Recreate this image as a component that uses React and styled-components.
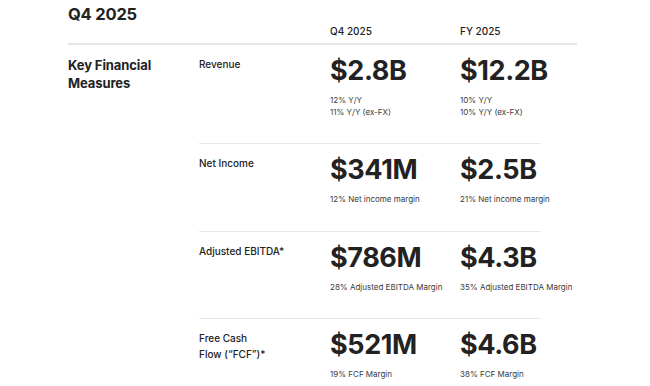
import React from "react";
import styled, { createGlobalStyle } from "styled-components";

const Global = createGlobalStyle`
  html, body { margin: 0; padding: 0; background: #fff; }
  body { font-family: Inter, "Noto Sans", "Liberation Sans", sans-serif; color: #222; }
`;

const Page = styled.div`
  width: 650px;
  height: 386px;
  overflow: hidden;
  box-sizing: border-box;
  padding: 3px 0 0 68px;
`;

const HeaderRow = styled.div`
  display: grid;
  width: 509px;
  grid-template-columns: 131px 131px 130px 117px;
  grid-auto-rows: 35px;
  align-items: end;
  padding-bottom: 5px;
  border-bottom: 2px solid #e6e6e6;
`;

const Title = styled.h1`
  grid-column: 1 / span 2;
  align-self: start;
  margin: 0;
  font-size: 16.5px;
  line-height: 22px;
  font-weight: 700;
  letter-spacing: -0.2px;
  color: #222;
`;

const ColHead = styled.div`
  font-size: 10px;
  line-height: 14px;
  font-weight: 500;
  color: #222;
`;

const Body = styled.div`
  display: grid;
  grid-template-columns: 131px 342px;
`;

const Section = styled.div`
  padding-top: 11px;
  font-size: 13px;
  line-height: 18px;
  font-weight: 700;
  color: #222;
  letter-spacing: -0.1px;
`;

const Rows = styled.div`
  display: flex;
  flex-direction: column;
`;

const Row = styled.div`
  display: grid;
  grid-template-columns: 131px 130px 81px;
  padding: 10px 0 25px;
  border-top: ${(p) => (p.$first ? "none" : "1.5px solid #e8e8e8")};
`;

const Label = styled.div`
  padding-top: 1px;
  font-size: 10px;
  line-height: 16px;
  font-weight: 500;
  color: #222;
`;

const Cell = styled.div`
  white-space: nowrap;
`;

const Value = styled.div`
  font-size: 27px;
  line-height: 32px;
  font-weight: 700;
  letter-spacing: -0.4px;
  color: #222;
  margin-bottom: 8px;
`;

const Sub = styled.div`
  font-size: 8px;
  line-height: 11.5px;
  font-weight: 400;
  color: #3a3a3a;
`;

const rows = [
  {
    label: "Revenue",
    q: { v: "$2.8B", s: ["12% Y/Y", "11% Y/Y (ex-FX)"] },
    fy: { v: "$12.2B", s: ["10% Y/Y", "10% Y/Y (ex-FX)"] },
  },
  {
    label: "Net Income",
    q: { v: "$341M", s: ["12% Net income margin"] },
    fy: { v: "$2.5B", s: ["21% Net income margin"] },
  },
  {
    label: "Adjusted EBITDA*",
    q: { v: "$786M", s: ["28% Adjusted EBITDA Margin"] },
    fy: { v: "$4.3B", s: ["35% Adjusted EBITDA Margin"] },
  },
  {
    label: ["Free Cash", "Flow (\u201CFCF\u201D)*"],
    q: { v: "$521M", s: ["19% FCF Margin"] },
    fy: { v: "$4.6B", s: ["38% FCF Margin"] },
  },
];

function Metric({ data }) {
  return (
    <Cell>
      <Value>{data.v}</Value>
      {data.s.map((t) => (
        <Sub key={t}>{t}</Sub>
      ))}
    </Cell>
  );
}

export default function App() {
  return (
    <>
      <Global />
      <Page>
        <HeaderRow>
          <Title>Q4 2025</Title>
          <ColHead>Q4 2025</ColHead>
          <ColHead>FY 2025</ColHead>
        </HeaderRow>
        <Body>
          <Section>
            Key Financial
            <br />
            Measures
          </Section>
          <Rows>
            {rows.map((r, i) => (
              <Row key={i} $first={i === 0}>
                <Label>
                  {Array.isArray(r.label)
                    ? r.label.map((l, j) => <div key={j}>{l}</div>)
                    : r.label}
                </Label>
                <Metric data={r.q} />
                <Metric data={r.fy} />
              </Row>
            ))}
          </Rows>
        </Body>
      </Page>
    </>
  );
}
